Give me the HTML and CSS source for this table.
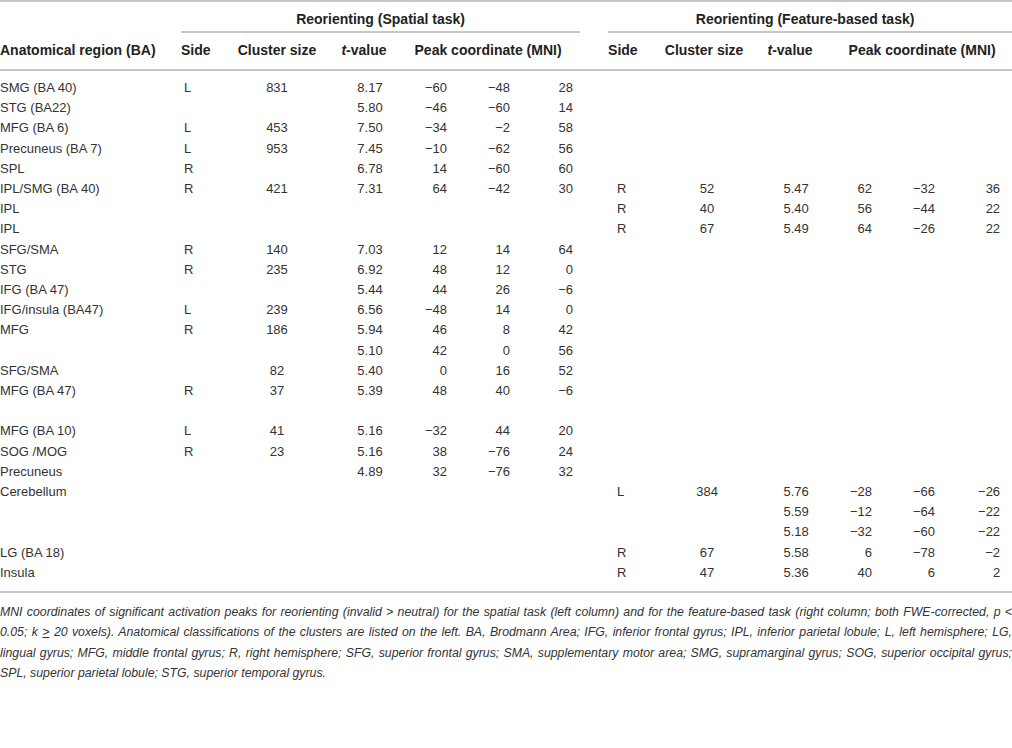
FILE: index.html
```html
<!DOCTYPE html>
<html>
<head>
<meta charset="utf-8">
<link rel="stylesheet" href="styles.css">
</head>
<body>
<table class="tbl">
<colgroup>
<col style="width:181px"><col style="width:51px"><col style="width:90px"><col style="width:84px"><col style="width:44px"><col style="width:63px"><col style="width:67px"><col style="width:28px"><col style="width:52px"><col style="width:88px"><col style="width:84px"><col style="width:46px"><col style="width:62px"><col style="width:72px">
</colgroup>
<thead>
<tr class="grp">
<th></th>
<th colspan="6" class="g g-sp">Reorienting (Spatial task)</th>
<th></th>
<th colspan="6" class="g g-ft">Reorienting (Feature-based task)</th>
</tr>
<tr class="cols">
<th class="h-reg">Anatomical region (BA)</th>
<th class="h-side">Side</th>
<th class="h-c">Cluster size</th>
<th class="h-c"><i>t</i>-value</th>
<th colspan="3" class="h-peak">Peak coordinate (MNI)</th>
<th></th>
<th class="h-side">Side</th>
<th class="h-c">Cluster size</th>
<th class="h-c"><i>t</i>-value</th>
<th colspan="3" class="h-peak2">Peak coordinate (MNI)</th>
</tr>
</thead>
<tbody>
<tr class="first"><td>SMG (BA 40)</td><td>L</td><td>831</td><td>8.17</td><td>−60</td><td>−48</td><td>28</td><td></td><td></td><td></td><td></td><td></td><td></td><td></td></tr>
<tr><td>STG (BA22)</td><td></td><td></td><td>5.80</td><td>−46</td><td>−60</td><td>14</td><td></td><td></td><td></td><td></td><td></td><td></td><td></td></tr>
<tr><td>MFG (BA 6)</td><td>L</td><td>453</td><td>7.50</td><td>−34</td><td>−2</td><td>58</td><td></td><td></td><td></td><td></td><td></td><td></td><td></td></tr>
<tr><td>Precuneus (BA 7)</td><td>L</td><td>953</td><td>7.45</td><td>−10</td><td>−62</td><td>56</td><td></td><td></td><td></td><td></td><td></td><td></td><td></td></tr>
<tr><td>SPL</td><td>R</td><td></td><td>6.78</td><td>14</td><td>−60</td><td>60</td><td></td><td></td><td></td><td></td><td></td><td></td><td></td></tr>
<tr><td>IPL/SMG (BA 40)</td><td>R</td><td>421</td><td>7.31</td><td>64</td><td>−42</td><td>30</td><td></td><td>R</td><td>52</td><td>5.47</td><td>62</td><td>−32</td><td>36</td></tr>
<tr><td>IPL</td><td></td><td></td><td></td><td></td><td></td><td></td><td></td><td>R</td><td>40</td><td>5.40</td><td>56</td><td>−44</td><td>22</td></tr>
<tr><td>IPL</td><td></td><td></td><td></td><td></td><td></td><td></td><td></td><td>R</td><td>67</td><td>5.49</td><td>64</td><td>−26</td><td>22</td></tr>
<tr><td>SFG/SMA</td><td>R</td><td>140</td><td>7.03</td><td>12</td><td>14</td><td>64</td><td></td><td></td><td></td><td></td><td></td><td></td><td></td></tr>
<tr><td>STG</td><td>R</td><td>235</td><td>6.92</td><td>48</td><td>12</td><td>0</td><td></td><td></td><td></td><td></td><td></td><td></td><td></td></tr>
<tr><td>IFG (BA 47)</td><td></td><td></td><td>5.44</td><td>44</td><td>26</td><td>−6</td><td></td><td></td><td></td><td></td><td></td><td></td><td></td></tr>
<tr><td>IFG/insula (BA47)</td><td>L</td><td>239</td><td>6.56</td><td>−48</td><td>14</td><td>0</td><td></td><td></td><td></td><td></td><td></td><td></td><td></td></tr>
<tr><td>MFG</td><td>R</td><td>186</td><td>5.94</td><td>46</td><td>8</td><td>42</td><td></td><td></td><td></td><td></td><td></td><td></td><td></td></tr>
<tr><td></td><td></td><td></td><td>5.10</td><td>42</td><td>0</td><td>56</td><td></td><td></td><td></td><td></td><td></td><td></td><td></td></tr>
<tr><td>SFG/SMA</td><td></td><td>82</td><td>5.40</td><td>0</td><td>16</td><td>52</td><td></td><td></td><td></td><td></td><td></td><td></td><td></td></tr>
<tr><td>MFG (BA 47)</td><td>R</td><td>37</td><td>5.39</td><td>48</td><td>40</td><td>−6</td><td></td><td></td><td></td><td></td><td></td><td></td><td></td></tr>
<tr class="blank"><td>&nbsp;</td><td></td><td></td><td></td><td></td><td></td><td></td><td></td><td></td><td></td><td></td><td></td><td></td><td></td></tr>
<tr><td>MFG (BA 10)</td><td>L</td><td>41</td><td>5.16</td><td>−32</td><td>44</td><td>20</td><td></td><td></td><td></td><td></td><td></td><td></td><td></td></tr>
<tr><td>SOG /MOG</td><td>R</td><td>23</td><td>5.16</td><td>38</td><td>−76</td><td>24</td><td></td><td></td><td></td><td></td><td></td><td></td><td></td></tr>
<tr><td>Precuneus</td><td></td><td></td><td>4.89</td><td>32</td><td>−76</td><td>32</td><td></td><td></td><td></td><td></td><td></td><td></td><td></td></tr>
<tr><td>Cerebellum</td><td></td><td></td><td></td><td></td><td></td><td></td><td></td><td>L</td><td>384</td><td>5.76</td><td>−28</td><td>−66</td><td>−26</td></tr>
<tr><td></td><td></td><td></td><td></td><td></td><td></td><td></td><td></td><td></td><td></td><td>5.59</td><td>−12</td><td>−64</td><td>−22</td></tr>
<tr><td></td><td></td><td></td><td></td><td></td><td></td><td></td><td></td><td></td><td></td><td>5.18</td><td>−32</td><td>−60</td><td>−22</td></tr>
<tr><td>LG (BA 18)</td><td></td><td></td><td></td><td></td><td></td><td></td><td></td><td>R</td><td>67</td><td>5.58</td><td>6</td><td>−78</td><td>−2</td></tr>
<tr class="last"><td>Insula</td><td></td><td></td><td></td><td></td><td></td><td></td><td></td><td>R</td><td>47</td><td>5.36</td><td>40</td><td>6</td><td>2</td></tr>
</tbody>
</table>
<div class="note">
<span class="ln">MNI coordinates of significant activation peaks for reorienting (invalid &gt; neutral) for the spatial task (left column) and for the feature-based task (right column; both FWE-corrected, p &lt;</span>
<span class="ln">0.05; k <u>&gt;</u> 20 voxels). Anatomical classifications of the clusters are listed on the left. BA, Brodmann Area; IFG, inferior frontal gyrus; IPL, inferior parietal lobule; L, left hemisphere; LG,</span>
<span class="ln">lingual gyrus; MFG, middle frontal gyrus; R, right hemisphere; SFG, superior frontal gyrus; SMA, supplementary motor area; SMG, supramarginal gyrus; SOG, superior occipital gyrus;</span>
<span class="ln end">SPL, superior parietal lobule; STG, superior temporal gyrus.</span>
</div>
</body>
</html>
```

FILE: styles.css
```css
html, body {
  margin: 0;
  padding: 0;
  background: #fff;
}
body {
  width: 1012px;
  height: 748px;
  overflow: hidden;
  font-family: "Liberation Sans", Arial, Helvetica, sans-serif;
  color: #333;
}
.tbl {
  width: 1012px;
  table-layout: fixed;
  border-collapse: separate;
  border-spacing: 0;
  border-top: 2px solid #c6c6c6;
}
.tbl th {
  font-size: 14px;
  font-weight: bold;
  color: #222;
  line-height: 18px;
  padding: 0;
  white-space: nowrap;
}
.grp th {
  padding: 8px 0 3px;
}
.grp .g {
  text-align: center;
  border-bottom: 2px solid #c6c6c6;
}
.grp .g-ft {
  padding-right: 10px;
}
.cols th {
  padding: 8px 0 10px;
  border-bottom: 2px solid #c6c6c6;
}
.h-reg, .h-side {
  text-align: left;
}
.h-c {
  text-align: center;
}
.h-peak {
  text-align: center;
  padding-right: 10px !important;
}
.h-peak2 {
  text-align: center;
}
.tbl td {
  font-size: 13px;
  line-height: 20.2px;
  padding: 0;
  white-space: nowrap;
}
.tbl tr.first td {
  padding-top: 7px;
}
.tbl tr.last td {
  padding-bottom: 8px;
  border-bottom: 2px solid #c6c6c6;
}
.tbl td:nth-child(1) { text-align: left; }
.tbl td:nth-child(2) { text-align: left; padding-left: 3px; }
.tbl td:nth-child(3) { text-align: center; }
.tbl td:nth-child(4) { text-align: center; padding-left: 12px; }
.tbl td:nth-child(5) { text-align: right; padding-right: 3px; }
.tbl td:nth-child(6) { text-align: right; padding-right: 3px; }
.tbl td:nth-child(7) { text-align: right; padding-right: 7px; }
.tbl td:nth-child(9) { text-align: left; padding-left: 9px; }
.tbl td:nth-child(10) { text-align: center; padding-left: 6px; }
.tbl td:nth-child(11) { text-align: center; padding-left: 12px; }
.tbl td:nth-child(12) { text-align: right; padding-right: 6px; }
.tbl td:nth-child(13) { text-align: right; padding-right: 5px; }
.tbl td:nth-child(14) { text-align: right; padding-right: 12px; }
.note {
  padding-top: 9px;
  font-size: 12.3px;
  font-style: italic;
  line-height: 20.3px;
  color: #333;
}
.ln {
  display: block;
  text-align: justify;
  text-align-last: justify;
}
.ln.end {
  text-align-last: left;
}
```
